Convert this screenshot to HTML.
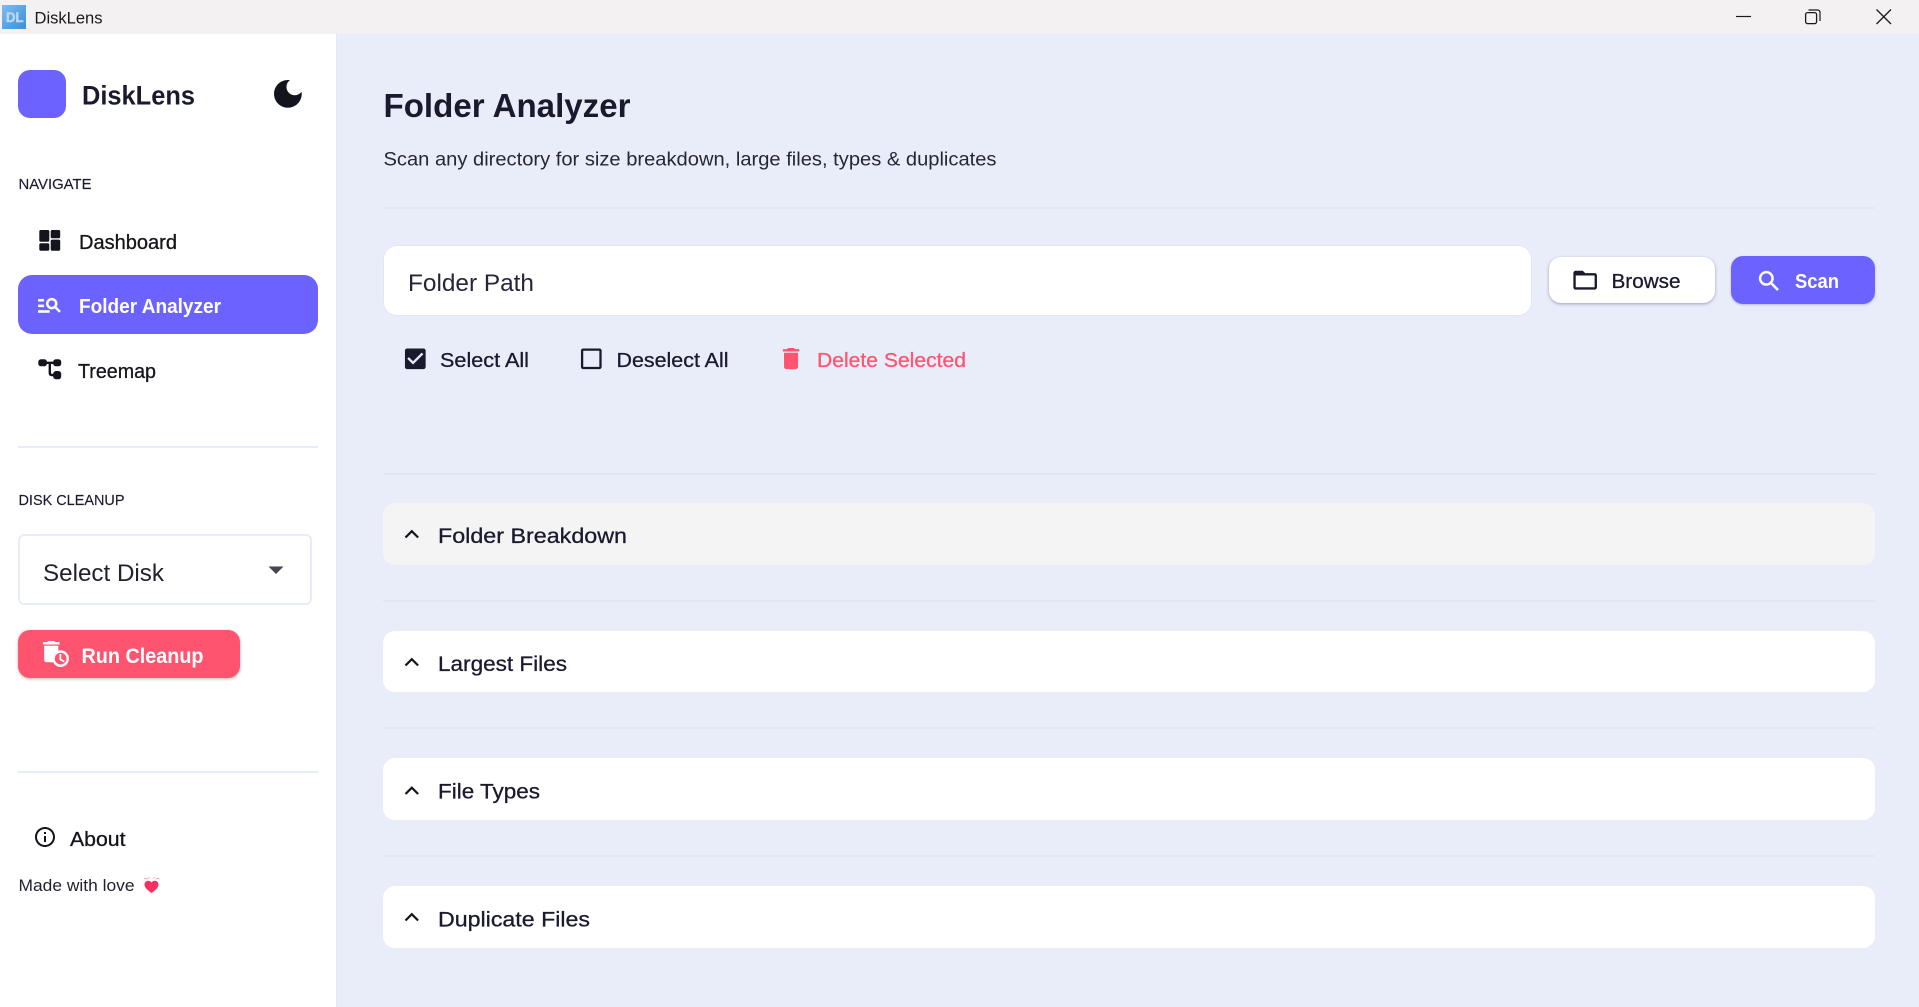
<!DOCTYPE html>
<html lang="en">
<head>
<meta charset="utf-8">
<title>DiskLens</title>
<style>
html,body{margin:0;padding:0;width:1919px;height:1007px;overflow:hidden;background:#e9edfa;font-family:"Liberation Sans",sans-serif}
.b{position:absolute;box-sizing:border-box}
.hr{position:absolute;height:2px;background:#e2e5f4}
.shr{position:absolute;height:2px;background:#e8ebf8}
.panel{position:absolute;left:383px;width:1492px;background:#fff;border-radius:12px}
svg.o{position:absolute;left:0;top:0}
text{font-family:"Liberation Sans",sans-serif;fill:#1a1a2e}
.med{stroke:currentColor;stroke-width:.3px}
</style>
</head>
<body>
<div class="b" style="left:0;top:0;width:1919px;height:34px;background:#f3f1f2"></div>
<div class="b" style="left:2px;top:5px;width:24px;height:24px;background:linear-gradient(135deg,#7fbcec,#3a8ed8)"></div>
<div class="b" style="left:0;top:34px;width:336px;height:973px;background:#fff"></div>
<div class="b" style="left:336px;top:34px;width:1px;height:973px;background:#e3e7f6"></div>

<div class="b" style="left:18px;top:70px;width:48px;height:48px;background:#6c63ff;border-radius:12px"></div>
<div class="b" style="left:18px;top:275px;width:300px;height:59px;background:#6c63ff;border-radius:14px"></div>
<div class="shr" style="left:18px;top:446px;width:300px"></div>
<div class="b" style="left:18px;top:534px;width:294px;height:71px;background:#fff;border:2px solid #e8ebf8;border-radius:6px"></div>
<div class="b" style="left:18px;top:630px;width:222px;height:48px;background:#ff5470;border-radius:12px;box-shadow:0 1px 3px rgba(0,0,0,.28)"></div>
<div class="shr" style="left:18px;top:771px;width:300px"></div>

<div class="hr" style="left:383px;top:207px;width:1492px"></div>
<div class="b" style="left:383px;top:245px;width:1149px;height:71px;background:#fff;border:1px solid #e3e6f5;border-radius:14px"></div>
<div class="b" style="left:1549px;top:257px;width:166px;height:46px;background:#fff;border-radius:12px;box-shadow:0 1px 3px rgba(40,40,90,.4)"></div>
<div class="b" style="left:1731px;top:256px;width:144px;height:48px;background:#6c63ff;border-radius:12px;box-shadow:0 1px 2px rgba(40,40,90,.25)"></div>
<div class="hr" style="left:383px;top:473px;width:1492px"></div>
<div class="panel" style="top:503px;height:62px;background:#f4f4f5"></div>
<div class="hr" style="left:383px;top:600px;width:1492px"></div>
<div class="panel" style="top:631px;height:61px"></div>
<div class="hr" style="left:383px;top:727px;width:1492px"></div>
<div class="panel" style="top:758px;height:62px"></div>
<div class="hr" style="left:383px;top:855px;width:1492px"></div>
<div class="panel" style="top:886px;height:62px"></div>

<svg class="o" width="1919" height="1007" viewBox="0 0 1919 1007" xmlns="http://www.w3.org/2000/svg">
  <!-- title bar -->
  <text x="6" y="22" font-size="14" font-weight="700" textLength="17.5" lengthAdjust="spacingAndGlyphs" style="fill:#b9d9f3;stroke:#b9d9f3;stroke-width:.5px">DL</text>
  <text x="34.5" y="23.5" font-size="17" textLength="68" lengthAdjust="spacingAndGlyphs" style="fill:#1a1a1a">DiskLens</text>
  <path d="M1736 16.5h15" stroke="#1a1a1a" stroke-width="1.2" fill="none"/>
  <rect x="1805.6" y="12.6" width="11" height="11" rx="2" stroke="#1a1a1a" stroke-width="1.3" fill="none"/>
  <path d="M1808.5 10h9a2.5 2.5 0 0 1 2.5 2.5v8.5" stroke="#1a1a1a" stroke-width="1.2" fill="none"/>
  <path d="M1876.5 9.5l14.5 14.5M1891 9.5l-14.5 14.5" stroke="#1a1a1a" stroke-width="1.3" fill="none"/>

  <!-- brand -->
  <text x="82" y="104.5" font-size="27" font-weight="700" textLength="113" lengthAdjust="spacingAndGlyphs">DiskLens</text>
  <g transform="translate(269.4 75.4) scale(1.54)"><path fill="#14141c" d="M12 3c-4.97 0-9 4.03-9 9s4.03 9 9 9 9-4.03 9-9c0-.46-.04-.92-.1-1.36-.98 1.37-2.58 2.26-4.4 2.26-2.98 0-5.4-2.42-5.4-5.4 0-1.81.89-3.42 2.26-4.4-.44-.06-.9-.1-1.36-.1z"/></g>

  <!-- nav -->
  <text x="18.5" y="189" font-size="15" textLength="73" lengthAdjust="spacingAndGlyphs" class="med" style="stroke-width:.15px;color:#1a1a2e">NAVIGATE</text>
  <g fill="#14141c">
    <rect x="39.3" y="230" width="10" height="11.7" rx="1.5"/>
    <rect x="39.3" y="243.3" width="10" height="7.4" rx="1.5"/>
    <rect x="50.7" y="230" width="9.5" height="8.3" rx="1.5"/>
    <rect x="50.7" y="239.6" width="9.5" height="11.1" rx="1.5"/>
  </g>
  <text x="79" y="249" font-size="20" textLength="98" lengthAdjust="spacingAndGlyphs" class="med" style="fill:#14141c;color:#14141c">Dashboard</text>

  <g transform="translate(36.06 291.3) scale(1.12)"><path fill="#fff" stroke="#fff" stroke-width=".3" d="M7 9H2V7h5v2zm0 3H2v2h5v-2zm13.59 7-3.83-3.83c-.8.52-1.74.83-2.76.83-2.76 0-5-2.24-5-5s2.24-5 5-5 5 2.24 5 5c0 1.02-.31 1.96-.83 2.75L22 17.59 20.59 19zM17 11c0-1.65-1.35-3-3-3s-3 1.35-3 3 1.35 3 3 3 3-1.35 3-3zM2 19h10v-2H2v2z"/></g>
  <text x="79" y="313" font-size="20" font-weight="700" textLength="142" lengthAdjust="spacingAndGlyphs" style="fill:#fff">Folder Analyzer</text>

  <g fill="#14141c">
    <rect x="38.3" y="359.3" width="8.6" height="7" rx="2.6"/>
    <rect x="53.2" y="359.3" width="8" height="7" rx="2.6"/>
    <rect x="53.2" y="371" width="8" height="8.3" rx="2.8"/>
  </g>
  <path d="M45 362.8h9M49.8 362.8v10.2q0 2 2 2h2" stroke="#14141c" stroke-width="2.4" fill="none"/>
  <text x="78" y="378" font-size="20" textLength="78" lengthAdjust="spacingAndGlyphs" class="med" style="fill:#14141c;color:#14141c">Treemap</text>

  <!-- disk cleanup -->
  <text x="18.5" y="505" font-size="15" textLength="106" lengthAdjust="spacingAndGlyphs" class="med" style="stroke-width:.15px;color:#1a1a2e">DISK CLEANUP</text>
  <text x="43" y="581" font-size="24" textLength="121" lengthAdjust="spacingAndGlyphs" style="fill:#22222e">Select Disk</text>
  <path d="M268.5 566.5h15l-7.5 7.5z" fill="#46464e"/>

  <g transform="translate(41.8 639.8) scale(1.18)"><path fill="#fff" d="M15 2h-3.5l-1-1h-5l-1 1H1v2h14zM16 9c-.7 0-1.37.1-2 .29V5H2v12c0 1.1.9 2 2 2h5.68c1.12 2.36 3.53 4 6.32 4 3.87 0 7-3.13 7-7s-3.13-7-7-7zm0 12c-2.76 0-5-2.24-5-5s2.24-5 5-5 5 2.24 5 5-2.24 5-5 5zM16.5 12H15v5l3.6 2.1.8-1.2-2.9-1.7z"/></g>
  <text x="81.5" y="663" font-size="21.5" font-weight="700" textLength="122" lengthAdjust="spacingAndGlyphs" style="fill:#fff">Run Cleanup</text>

  <g transform="translate(33 825)"><path fill="#14141c" d="M11 7h2v2h-2zm0 4h2v6h-2zm1-9C6.48 2 2 6.48 2 12s4.48 10 10 10 10-4.48 10-10S17.52 2 12 2zm0 18c-4.41 0-8-3.59-8-8s3.59-8 8-8 8 3.59 8 8-3.59 8-8 8z"/></g>
  <text x="70" y="846" font-size="20" textLength="55.5" lengthAdjust="spacingAndGlyphs" class="med" style="fill:#14141c;color:#14141c">About</text>
  <text x="18.5" y="891" font-size="17" textLength="116" lengthAdjust="spacingAndGlyphs" style="fill:#22222e">Made with love</text>
  <path d="M151.5 893c-4-3-7-5.3-7-8.5 0-2.2 1.7-3.8 3.7-3.8 1.4 0 2.6.7 3.3 1.9.7-1.2 1.9-1.9 3.3-1.9 2 0 3.7 1.6 3.7 3.8 0 3.2-3 5.5-7 8.5z" fill="#f5325f"/>
  <path d="M144 879c1.5-.8 3-.6 4 .3M159.5 879c-1.5-.8-3-.6-4 .3M149.5 878.5l-.8-1.5M153.5 878.5l.8-1.5" stroke="#f7a0b5" stroke-width="1" fill="none"/>

  <!-- main header -->
  <text x="383.5" y="117" font-size="33" font-weight="700" textLength="247" lengthAdjust="spacingAndGlyphs">Folder Analyzer</text>
  <text x="383.5" y="165.5" font-size="19.5" textLength="613" lengthAdjust="spacingAndGlyphs" style="fill:#26263a">Scan any directory for size breakdown, large files, types &amp; duplicates</text>

  <!-- search row -->
  <text x="408" y="291" font-size="24" textLength="126" lengthAdjust="spacingAndGlyphs" style="fill:#26263a">Folder Path</text>
  <g transform="translate(1571 266) scale(1.18)"><path fill="#1a1a2e" d="M20 6h-8l-2-2H4c-1.1 0-1.99.9-1.99 2L2 18c0 1.1.9 2 2 2h16c1.1 0 2-.9 2-2V8c0-1.1-.9-2-2-2zm0 12H4V8h16v10z"/></g>
  <text x="1611.5" y="288" font-size="20" textLength="69" lengthAdjust="spacingAndGlyphs" class="med" style="color:#1a1a2e">Browse</text>
  <g transform="translate(1755.6 267.6) scale(1.13)"><path fill="#fff" stroke="#fff" stroke-width=".25" d="M15.5 14h-.79l-.28-.27C15.41 12.59 16 11.11 16 9.5 16 5.91 13.09 3 9.5 3S3 5.91 3 9.5 5.91 16 9.5 16c1.61 0 3.09-.59 4.23-1.57l.27.28v.79l5 4.99L20.49 19l-4.99-5zm-6 0C7.01 14 5 11.99 5 9.5S7.01 5 9.5 5 14 7.01 14 9.5 11.99 14 9.5 14z"/></g>
  <text x="1795" y="288" font-size="20" font-weight="700" textLength="44" lengthAdjust="spacingAndGlyphs" style="fill:#fff">Scan</text>

  <!-- actions -->
  <g transform="translate(401.5 345) scale(1.15)"><path fill="#1a1a2e" d="M19 3H5c-1.11 0-2 .9-2 2v14c0 1.1.89 2 2 2h14c1.11 0 2-.9 2-2V5c0-1.1-.89-2-2-2zm-9 14l-5-5 1.41-1.41L10 14.17l7.59-7.59L19 8l-9 9z"/></g>
  <text x="440" y="367" font-size="20.5" textLength="89" lengthAdjust="spacingAndGlyphs" class="med" style="color:#1a1a2e">Select All</text>
  <g transform="translate(577.5 345) scale(1.15)"><path fill="#1a1a2e" d="M19 5v14H5V5h14m0-2H5c-1.1 0-2 .9-2 2v14c0 1.1.9 2 2 2h14c1.1 0 2-.9 2-2V5c0-1.1-.9-2-2-2z"/></g>
  <text x="616.5" y="367" font-size="20.5" textLength="112" lengthAdjust="spacingAndGlyphs" class="med" style="color:#1a1a2e">Deselect All</text>
  <g transform="translate(777 344.5) scale(1.17)"><path fill="#ff5470" d="M6 19c0 1.1.9 2 2 2h8c1.1 0 2-.9 2-2V7H6v12zM19 4h-3.5l-1-1h-5l-1 1H5v2h14V4z"/></g>
  <text x="817" y="367" font-size="20.5" textLength="149" lengthAdjust="spacingAndGlyphs" class="med" style="fill:#ff5470;color:#ff5470">Delete Selected</text>

  <!-- panels -->
  <path d="M405.5 537.5l6.3-6.3 6.3 6.3" stroke="#14141c" stroke-width="2.2" fill="none"/>
  <text x="438" y="543" font-size="21.5" textLength="189" lengthAdjust="spacingAndGlyphs" class="med" style="color:#1a1a2e">Folder Breakdown</text>
  <path d="M405.5 665.5l6.3-6.3 6.3 6.3" stroke="#14141c" stroke-width="2.2" fill="none"/>
  <text x="438" y="671" font-size="21.5" textLength="129" lengthAdjust="spacingAndGlyphs" class="med" style="color:#1a1a2e">Largest Files</text>
  <path d="M405.5 794l6.3-6.3 6.3 6.3" stroke="#14141c" stroke-width="2.2" fill="none"/>
  <text x="438" y="798.5" font-size="21.5" textLength="102" lengthAdjust="spacingAndGlyphs" class="med" style="color:#1a1a2e">File Types</text>
  <path d="M405.5 920.5l6.3-6.3 6.3 6.3" stroke="#14141c" stroke-width="2.2" fill="none"/>
  <text x="438" y="926.5" font-size="21.5" textLength="152" lengthAdjust="spacingAndGlyphs" class="med" style="color:#1a1a2e">Duplicate Files</text>
</svg>
</body>
</html>
